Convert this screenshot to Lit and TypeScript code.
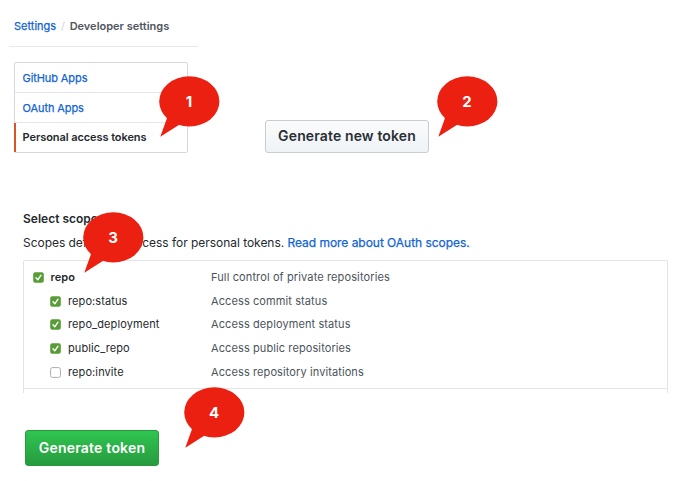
import { LitElement, html, css, svg } from "lit";
import { customElement, property } from "lit/decorators.js";

@customElement("step-callout")
class StepCallout extends LitElement {
  @property() label = "";
  static styles = css`
    :host { display: block; position: absolute; width: 61px; height: 61px; }
    svg { display: block; position: absolute; inset: 0; }
    .num {
      position: relative; display: block; width: 60px; text-align: center;
      font: 700 15px/51px Inter, "Liberation Sans", sans-serif; color: #fff;
    }
  `;
  render() {
    return html`<svg width="61" height="61" viewBox="0 0 61 61">
        <ellipse cx="30.3" cy="25.4" rx="30.1" ry="25.1" fill="#eb2010" />
        <path d="M8.2 41.5 L1.3 60.8 L20.2 48.8 L20 36z" fill="#eb2010" />
      </svg><span class="num">${this.label}</span>`;
  }
}

@customElement("scope-check")
class ScopeCheck extends LitElement {
  @property({ type: Boolean }) checked = false;
  static styles = css`
    :host { display: block; width: 11px; height: 11px; }
    svg { display: block; }
  `;
  render() {
    return html`<svg width="11" height="11" viewBox="0 0 11 11">
      ${this.checked
        ? svg`<rect x="0.2" y="0.2" width="10.6" height="10.6" rx="2" fill="#579c35"/>
            <path d="M3 5.8 L4.8 7.8 L8 3.2" fill="none" stroke="#fff" stroke-width="1.4" stroke-linecap="round" stroke-linejoin="round"/>`
        : svg`<rect x="0.6" y="0.6" width="9.8" height="9.8" rx="1.8" fill="#fff" stroke="#adadad" stroke-width="1"/>`}
    </svg>`;
  }
}

interface Scope { name: string; text: string; on: boolean; }

const scopes: Scope[] = [
  { name: "repo", text: "Full control of private repositories", on: true },
  { name: "repo:status", text: "Access commit status", on: true },
  { name: "repo_deployment", text: "Access deployment status", on: true },
  { name: "public_repo", text: "Access public repositories", on: true },
  { name: "repo:invite", text: "Access repository invitations", on: false },
];

@customElement("app-root")
class AppRoot extends LitElement {
  static styles = css`
    :host {
      display: block; box-sizing: border-box; width: 684px; height: 481px;
      overflow: hidden; background: #fff; color: #24292e;
      font: 11px/16px Inter, "Liberation Sans", sans-serif;
    }
    * { box-sizing: border-box; }
    span, a, button { white-space: nowrap; }
    a { color: #1264d3; text-decoration: none; -webkit-text-stroke: 0.25px; }
    .top { display: flex; height: 211px; }
    .side { width: 198px; padding-left: 9px; }
    .crumbs {
      display: flex; height: 47px; padding: 18px 0 0 5px;
      border-bottom: 1px solid #e6e8eb;
    }
    .sep { width: 13.5px; text-align: center; color: #d1d5da; }
    .current { font-weight: 600; color: #4f565e; }
    .menu {
      position: relative; width: 174px; height: 91px; margin: 15px 0 0 5px;
      border: 1px solid #d5d9de; border-radius: 2px;
    }
    .item {
      display: flex; align-items: center; height: 30px; padding-left: 7.6px;
      border-bottom: 1px solid #e3e6ea; letter-spacing: -0.1px;
    }
    .item.active {
      height: 29px; margin-left: -1px; padding: 0 0 1px 6.6px; border-bottom: 0;
      border-left: 2px solid #d2582a; font-weight: 600; letter-spacing: -0.08px;
    }
    .c1 { left: 144px; top: 13px; }
    .new { position: relative; width: 164px; height: 33px; margin: 120px 0 0 67px; }
    button {
      display: flex; align-items: center; justify-content: center; padding: 0;
      font: 600 14px/20px Inter, "Liberation Sans", sans-serif; border-radius: 3px;
    }
    .light {
      width: 164px; height: 33px; color: #2a2f34; border: 1px solid #c9cdd1;
      background: linear-gradient(#fafbfc, #eff3f6); letter-spacing: 0.13px;
      padding-bottom: 2px;
    }
    .c2 { left: 172px; top: -44px; }
    .scopes { position: relative; padding-left: 23px; height: 182px; }
    h2 { margin: 0; font: 600 12px/16px Inter, "Liberation Sans", sans-serif; }
    .lead {
      margin: 8px 0 0; font-size: 12px; line-height: 16px; white-space: nowrap;
      letter-spacing: -0.035px;
    }
    .c3 { left: 83px; top: 1px; }
    .table {
      width: 645px; height: 133px; margin-top: 9px; padding-top: 4px;
      border: 1px solid #e1e4e8; border-bottom: 0; border-radius: 2px 2px 0 0;
    }
    .rows { height: 124px; border-bottom: 1px solid #e1e4e8; }
    .row {
      display: grid; grid-template-columns: 17.5px 160.5px 1fr; align-items: start;
      height: 24px; padding: 4px 0 0 9px; letter-spacing: 0.1px;
    }
    .row:nth-child(2) { height: 23px; }
    scope-check { margin-top: 3px; }
    .row.child { grid-template-columns: 18px 143px 1fr; padding-left: 26px; }
    .row.parent .name { font-weight: 600; }
    .row.parent .desc { letter-spacing: 0.12px; }
    .desc { color: #4b535c; }
    .bottom { position: relative; padding: 37px 0 0 25px; }
    .green {
      width: 134px; height: 36px; color: #fff; border: 1px solid #2a9a42;
      background: linear-gradient(#2fc550, #269b3e); letter-spacing: 0.22px;
    }
    .c4 { left: 184px; top: -6px; }
  `;

  render() {
    return html`
      <div class="top">
        <div class="side">
          <div class="crumbs">
            <a>Settings</a><span class="sep">/</span><span class="current">Developer settings</span>
          </div>
          <div class="menu">
            <div class="item"><a>GitHub Apps</a></div>
            <div class="item"><a>OAuth Apps</a></div>
            <div class="item active"><span>Personal access tokens</span></div>
            <step-callout class="c1" label="1"></step-callout>
          </div>
        </div>
        <div class="new">
          <button class="light"><span>Generate new token</span></button>
          <step-callout class="c2" label="2"></step-callout>
        </div>
      </div>
      <div class="scopes">
        <h2>Select scopes</h2>
        <p class="lead"><span>Scopes define the access for personal tokens. </span><a>Read more about OAuth scopes.</a></p>
        <div class="table"><div class="rows">
          ${scopes.map((s, i) => html`<div class="row ${i ? "child" : "parent"}">
            <scope-check ?checked=${s.on}></scope-check>
            <span class="name">${s.name}</span><span class="desc">${s.text}</span>
          </div>`)}
        </div></div>
        <step-callout class="c3" label="3"></step-callout>
      </div>
      <div class="bottom">
        <button class="green"><span>Generate token</span></button>
        <step-callout class="c4" label="4"></step-callout>
      </div>
    `;
  }
}
